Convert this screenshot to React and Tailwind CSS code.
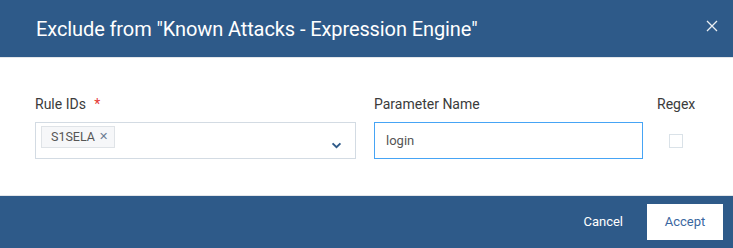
export default function App() {
    return (
        <div
            className="w-[733px] h-[248px] flex flex-col bg-white"
            style={{ fontFamily: "Roboto, 'Liberation Sans', sans-serif" }}
        >
            {/* Header */}
            <div className="h-[58px] bg-[#2e5a89] flex items-center justify-between pl-[36px] pr-[15px] border-b border-[#e3e6ea]">
                <h2 className="text-[20px] text-white leading-none tracking-[-0.1px]">
                    Exclude from "Known Attacks - Expression Engine"
                </h2>
                <button className="w-[12px] h-[12px] text-white/90 mb-[6px]">
                    <svg viewBox="0 0 12 12" width="12" height="12">
                        <path
                            d="M1 1 L11 11 M11 1 L1 11"
                            stroke="currentColor"
                            strokeWidth="1.3"
                            fill="none"
                        />
                    </svg>
                </button>
            </div>

            {/* Body */}
            <div className="flex-1 flex pl-[35px] pt-[38px] gap-[18px]">
                <div className="w-[321px]">
                    <label className="block text-[14px] text-[#3b3b3b] leading-[17px] mb-[9px]">
                        Rule IDs <span className="text-[#e53935] ml-[5px]">*</span>
                    </label>
                    <div className="h-[37px] border border-[#d3dbe3] flex items-start justify-between pl-[5px] pr-[13px] pt-[3px]">
                        <span className="h-[22px] flex items-center gap-[4px] pl-[9px] pr-[6px] bg-[#f6f7f9] border border-[#dfe3e7] text-[12.5px] text-[#555]">
                            S1SELA <span className="text-[11px] text-[#6b7c93]">✕</span>
                        </span>
                        <svg
                            viewBox="0 0 12 8"
                            width="11"
                            height="7"
                            className="mt-[16px] text-[#2e5a89]"
                        >
                            <path
                                d="M1.5 1.5 L6 6 L10.5 1.5"
                                stroke="currentColor"
                                strokeWidth="2.2"
                                fill="none"
                            />
                        </svg>
                    </div>
                </div>
                <div className="w-[269px]">
                    <label className="block text-[14px] text-[#3b3b3b] leading-[17px] mb-[9px]">
                        Parameter Name
                    </label>
                    <input
                        className="w-full h-[37px] border border-[#46a4f5] px-[11px] text-[13px] text-[#555] outline-none"
                        defaultValue="login"
                    />
                </div>
                <div className="ml-[-4px]">
                    <label className="block text-[14px] text-[#3b3b3b] leading-[17px] mb-[9px]">
                        Regex
                    </label>
                    <div className="h-[37px] flex items-center pl-[12px]">
                        <span className="w-[14px] h-[14px] border border-[#dae2e8] bg-white" />
                    </div>
                </div>
            </div>

            {/* Footer */}
            <div className="h-[53px] bg-[#2e5a89] flex items-center justify-end pr-[10px] border-t border-[#e3e6ea]">
                <button className="text-[13px] text-white mr-[24px]">
                    Cancel
                </button>
                <button className="w-[76px] h-[36px] bg-white text-[13px] text-[#3a67a0]">
                    Accept
                </button>
            </div>
        </div>
    );
}
